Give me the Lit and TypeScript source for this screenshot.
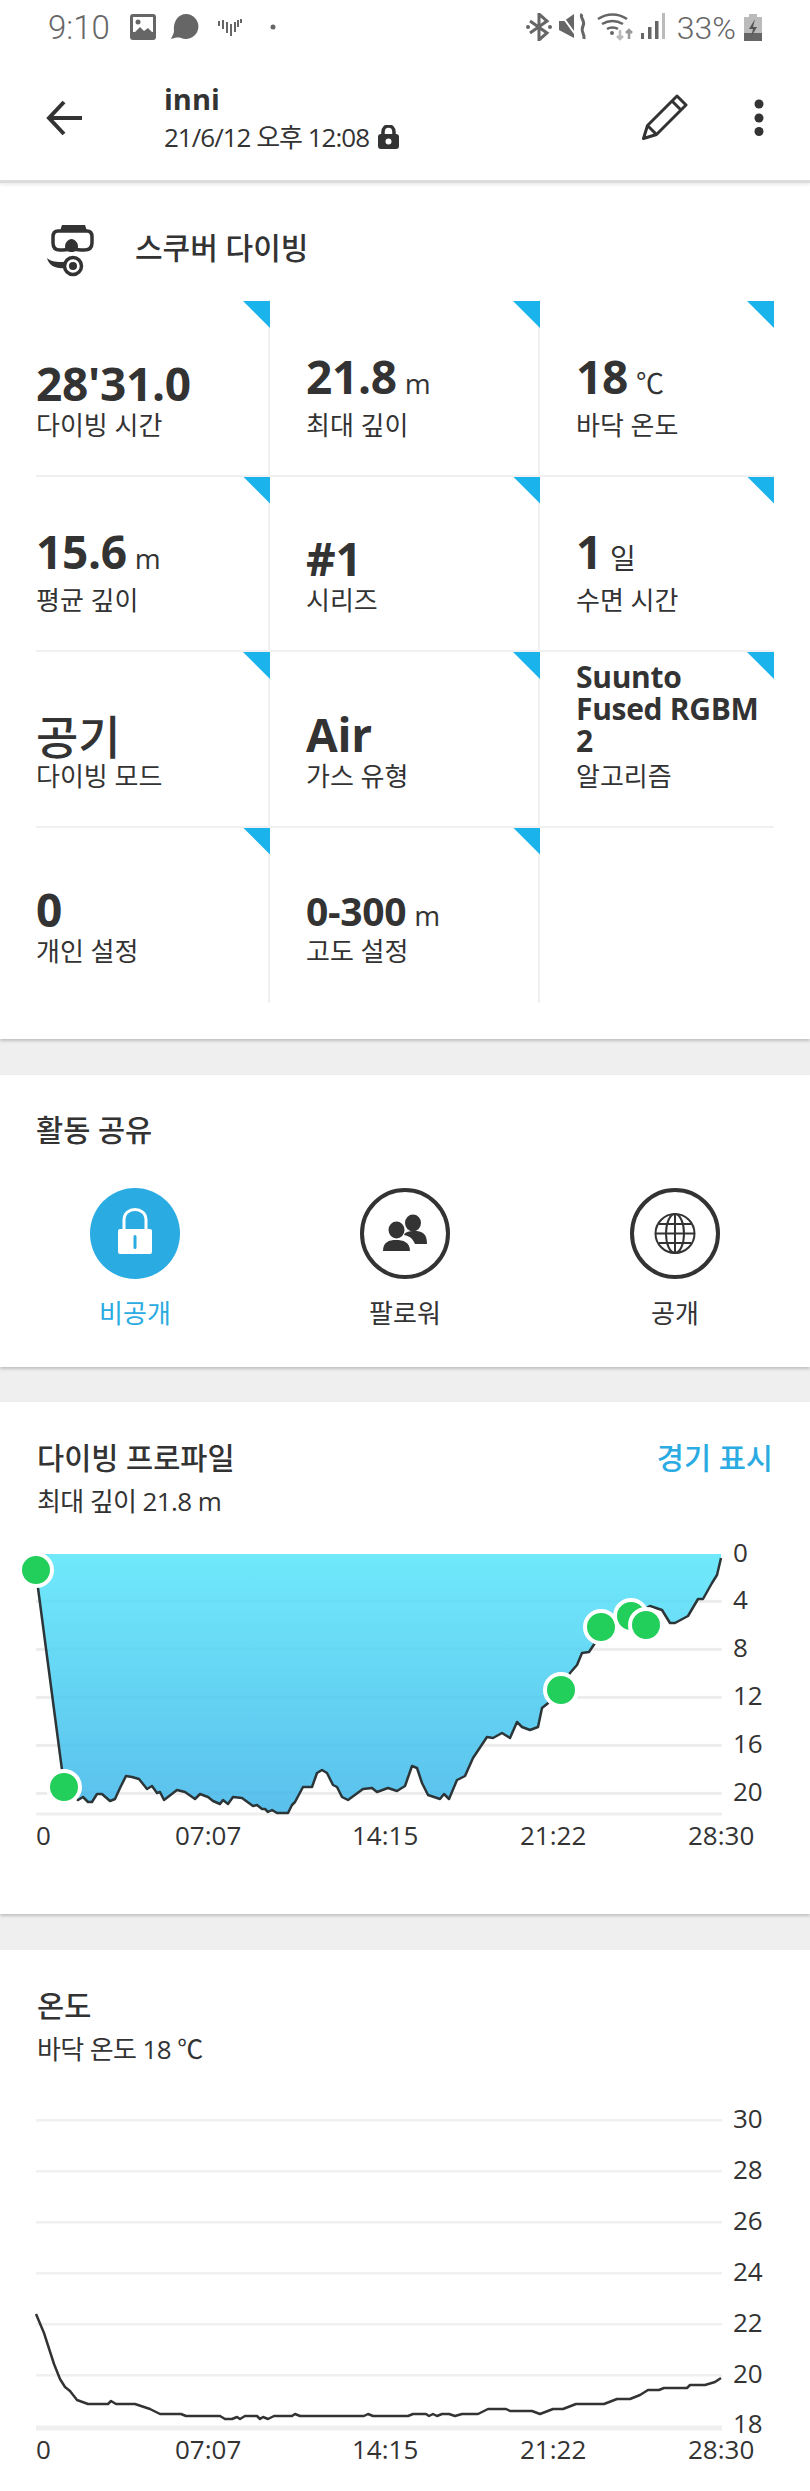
import { LitElement, html, css, svg } from "lit";
import { customElement } from "lit/decorators.js";

type Metric = { value: string; unit?: string; label: string; size?: string; corner?: boolean };

const METRICS: Metric[] = [
  { value: "28'31.0", label: "다이빙 시간" },
  { value: "21.8", unit: "m", label: "최대 깊이" },
  { value: "18", unit: "℃", label: "바닥 온도" },
  { value: "15.6", unit: "m", label: "평균 깊이" },
  { value: "#1", label: "시리즈" },
  { value: "1", unit: "일", label: "수면 시간" },
  { value: "공기", label: "다이빙 모드", size: "ko" },
  { value: "Air", label: "가스 유형" },
  { value: "Suunto\nFused RGBM\n2", label: "알고리즘", size: "long" },
  { value: "0", label: "개인 설정" },
  { value: "0-300", unit: "m", label: "고도 설정", size: "mid" },
  { value: "", label: "", corner: false },
];

const DEPTH = "36,1571 38,1588 62,1770 64,1787 78,1800 83,1797 88,1802 92,1802 97,1794 102,1794 110,1801 115,1799 120,1788 126,1776 132,1777 139,1779 147,1789 152,1786 157,1793 160,1792 164,1800 177,1790 185,1792 195,1799 200,1794 208,1797 213,1801 220,1804 223,1800 228,1804 233,1797 242,1798 253,1806 257,1805 262,1809 265,1809 268,1812 272,1810 277,1813 288,1813 292,1805 295,1802 303,1787 312,1787 317,1773 322,1770 327,1773 333,1785 337,1787 342,1797 348,1800 363,1789 372,1788 377,1792 388,1788 397,1791 405,1786 412,1766 417,1768 422,1783 428,1795 440,1799 444,1794 449,1799 457,1780 465,1776 473,1758 487,1737 493,1738 502,1733 510,1738 517,1722 522,1727 530,1730 538,1727 542,1708 552,1700 561,1690 570,1673 577,1665 582,1653 589,1652 595,1643 601,1627 631,1616 650,1606 662,1610 670,1623 675,1623 688,1616 698,1599 703,1599 712,1583 717,1575 721,1558";

const TEMP = "36,2314 44,2333 54,2364 60,2379 65,2387 70,2391 77,2400 88,2404 108,2404 111,2401 116,2404 135,2404 150,2409 160,2414 181,2414 186,2416 220,2416 225,2419 232,2419 237,2417 240,2419 245,2416 257,2416 260,2419 263,2417 268,2419 274,2416 292,2416 295,2414 300,2416 364,2416 368,2414 373,2416 408,2416 413,2414 426,2414 429,2416 433,2414 437,2416 442,2414 449,2414 455,2416 462,2414 478,2414 488,2409 506,2409 510,2411 532,2411 540,2414 553,2409 563,2409 576,2404 604,2404 617,2399 630,2399 640,2395 648,2390 659,2390 664,2388 687,2388 690,2385 705,2385 715,2382 721,2378";

const DOTS = [
  [36, 1570],
  [64, 1787],
  [561, 1690],
  [601, 1627],
  [631, 1616],
  [646, 1625],
];

const X_LABELS: [string, number][] = [
  ["0", 36],
  ["07:07", 175],
  ["14:15", 352],
  ["21:22", 520],
  ["28:30", 688],
];

@customElement("app-root")
export class AppRoot extends LitElement {
  static styles = css`
    :host {
      display: block;
      width: 810px;
      height: 2491px;
      overflow: hidden;
      background: #efefef;
      color: #333;
      font-family: "Open Sans", "Noto Sans CJK KR", sans-serif;
    }
    .head {
      position: relative;
      z-index: 2;
      height: 180px;
      background: #fff;
      box-shadow: 0 3px 0 #dcdcdc, 0 5px 3px #ececec;
    }
    .status {
      height: 55px;
      display: flex;
      align-items: center;
      color: #666;
      font-family: Roboto, sans-serif;
      font-weight: 300;
      font-size: 33px;
      padding-left: 48px;
      padding-right: 48px;
      box-sizing: border-box;
    }
    .status .time {
      width: 82px;
    }
    .status .spacer {
      flex: 1;
    }
    .status .pct {
      margin: 0 8px 0 12px;
      font-size: 32px;
    }
    .status svg {
      display: block;
      flex: none;
    }
    .bar {
      height: 125px;
      display: flex;
      align-items: center;
      padding: 0 46px;
    }
    .titles {
      margin-left: 82px;
      flex: 1;
    }
    .name {
      font-size: 29px;
      font-weight: 700;
      line-height: 36px;
    }
    .date {
      display: flex;
      align-items: center;
      gap: 9px;
      font-size: 26px;
      line-height: 36px;
      margin-top: 2px;
      letter-spacing: -1px;
    }
    .pencil {
      margin-right: 66px;
      margin-bottom: 2px;
    }
    .card {
      background: #fff;
      box-shadow: 0 2px 3px rgba(0, 0, 0, 0.2);
      position: relative;
    }
    .sport {
      height: 119px;
      display: flex;
      align-items: center;
      padding: 12px 0 0 46px;
      gap: 39px;
      font-size: 30px;
      font-weight: 500;
      box-sizing: border-box;
    }
    .sport svg {
      margin-top: 10px;
    }
    .metrics-wrap {
      padding: 0 36px 36px;
    }
    .metrics {
      display: grid;
      grid-template-columns: 234px 270px 234px;
      grid-template-rows: 175.5px 175.5px 175.5px 177.5px;
    }
    .cell {
      position: relative;
      box-sizing: border-box;
      padding: 0 0 33px 36px;
      border-right: 2px solid #f0f0f0;
      border-top: 2.5px solid #f0f0f0;
      display: flex;
      flex-direction: column;
      justify-content: flex-end;
    }
    .cell:nth-child(-n + 3) {
      border-top-color: transparent;
    }
    .cell:nth-child(n + 10) {
      padding-bottom: 35px;
    }
    .cell:nth-child(3n + 1) {
      padding-left: 0;
    }
    .cell:nth-child(3n) {
      border-right: 0;
    }
    .tri {
      position: absolute;
      right: -2px;
      top: 0;
      width: 27px;
      height: 27px;
      background: #1bb3eb;
      clip-path: polygon(0 0, 100% 0, 100% 100%);
    }
    .cell:nth-child(3n) .tri {
      right: 0;
    }
    .val {
      font-size: 46px;
      font-weight: 700;
      line-height: 50px;
      white-space: nowrap;
      letter-spacing: -0.3px;
    }
    .val.ko {
      font-weight: 500;
      font-family: "Noto Sans CJK KR", sans-serif;
      letter-spacing: 0;
      line-height: 50px;
    }
    .val.mid {
      font-size: 39px;
      line-height: 38px;
    }
    .val.long {
      font-size: 30px;
      line-height: 32px;
      white-space: pre-line;
      letter-spacing: -0.3px;
      margin-bottom: 2px;
    }
    .unit {
      font-size: 28px;
      font-weight: 400;
      margin-left: 8px;
      letter-spacing: 0;
    }
    .label {
      font-size: 26px;
      line-height: 34px;
      white-space: nowrap;
    }
    .section-title {
      font-size: 29.5px;
      font-weight: 500;
      line-height: 40px;
    }
    .gap {
      height: 36px;
    }
    .share {
      height: 292px;
      box-sizing: border-box;
      padding: 35px 36px 0;
    }
    .options {
      display: grid;
      grid-template-columns: repeat(3, 270px);
      margin: 38px 0 0 -36px;
    }
    .opt {
      display: flex;
      flex-direction: column;
      align-items: center;
      gap: 16px;
      font-size: 26px;
      line-height: 36px;
    }
    .opt.on {
      color: #2aabe2;
    }
    .opt svg {
      display: block;
    }
    .chart-sec {
      box-sizing: border-box;
    }
    .chart-sec.p {
      height: 512px;
      margin-top: -1px;
    }
    .chart-sec.t {
      height: 541px;
      box-shadow: none;
    }
    .chart-head {
      padding: 36px 37px 0;
    }
    .row {
      display: flex;
      justify-content: space-between;
    }
    .link {
      color: #2aabe2;
    }
    .sub {
      font-size: 26px;
      line-height: 36px;
      margin-top: 5px;
      letter-spacing: -0.6px;
    }
    .spacer-p {
      height: 21px;
    }
    .spacer-t {
      height: 33px;
    }
    svg.chart {
      display: block;
    }
    svg text {
      font-family: "Open Sans", sans-serif;
      font-size: 26px;
      fill: #333;
    }
  `;

  private statusLeft() {
    return html`
      <span class="time">9:10</span>
      <svg width="26" height="26" viewBox="0 0 26 26" style="margin-top:-2px">
        <rect width="26" height="26" rx="3" fill="#666" />
        <rect x="3" y="3" width="20" height="15" fill="#fff" />
        <circle cx="8" cy="8" r="2.5" fill="#666" />
        <path d="M3 20l7-7 4 4 4-3 5 5v2H3z" fill="#666" />
      </svg>
      <svg width="29" height="26" viewBox="0 0 29 26" style="margin:-2px 0 0 14px">
        <path d="M16 0a12.500 12.500 0 1 1-5 24c-3-1-7 0-10 1 1-3 3-5 3-8C3 8 8 0 16 0z" fill="#666" />
      </svg>
      <svg width="24" height="20" viewBox="0 0 24 20" style="margin:-2px 0 0 19px" stroke="#666" stroke-width="2" fill="none">
        <path d="M1 4v5M5 3v9M9 5v11M13 7v12M17 5v10M20 3v7M23 2v4" />
      </svg>
      <svg width="6" height="6" style="margin:-2px 0 0 28px"><circle cx="3" cy="3" r="2.500" fill="#666" /></svg>
      <span class="spacer"></span>
    `;
  }

  private statusRight() {
    return html`
      <svg width="26" height="28" viewBox="0 0 26 28" fill="none" stroke="#666" stroke-width="3" style="margin-top:-2px">
        <path d="M4 8l17 12-8 7V1l8 7L4 20" />
        <circle cx="2" cy="14" r="2" fill="#666" stroke="none" />
        <circle cx="24" cy="14" r="2" fill="#666" stroke="none" />
      </svg>
      <svg width="29" height="27" viewBox="0 0 29 27" style="margin:-2px 0 0 7px">
        <path d="M0 8h5l10-7v24L0 17z" fill="#666" />
        <path d="M3 3l16 22" stroke="#fff" stroke-width="2" />
        <path d="M23 1c-3 4 4 6 1 12s2 7 1 13" fill="none" stroke="#666" stroke-width="3" />
      </svg>
      <svg width="37" height="28" viewBox="0 0 37 28" fill="none" stroke="#666" stroke-width="2.500" style="margin:-2px 0 0 9px">
        <path d="M1 6c9-6 20-6 29 0M5 11c7-4 14-4 21 0M10 16c3-2 8-2 11 0" />
        <circle cx="15" cy="20" r="2" fill="#666" stroke="none" />
        <path d="M23 17v9M20 23l3 3 3-3" stroke="#bbb" />
        <path d="M32 26v-9M29 20l3-3 3 3" stroke="#999" />
      </svg>
      <svg width="24" height="27" viewBox="0 0 24 27" style="margin:-2px 0 0 7px">
        <rect x="0" y="20" width="3" height="6" fill="#666" />
        <rect x="7" y="14" width="3.500" height="12" fill="#666" />
        <rect x="14" y="8" width="3.500" height="18" fill="#666" />
        <rect x="21" y="0" width="3" height="26" fill="#bbb" />
      </svg>
      <span class="pct">33%</span>
      <svg width="18" height="27" viewBox="0 0 18 27" style="margin-top:-1px">
        <path d="M5 0h8v3h5v24H0V3h5z" fill="#bbb" />
        <rect y="19" width="18" height="8" fill="#666" />
        <path d="M11 5L5 15h4l-2 8 6-10H9z" fill="#555" />
      </svg>
    `;
  }

  private scuba() {
    return html`<svg width="50" height="54" viewBox="0 0 50 54">
      <path d="M16 1h23l2 6H14z" fill="#333" />
      <path d="M12 7h29q5 0 5 6v6q0 7-8 7h-3q-5 0-9-2-4 2-9 2h-3q-7 0-7-7v-6q0-6 5-6z" fill="none" stroke="#333" stroke-width="3.500" />
      <path d="M25.500 15c3.500 0 6.500 4 6.500 7.500S29 28 25.500 28 19 26 19 22.500 22 15 25.500 15z" fill="#333" />
      <circle cx="27" cy="42" r="8.500" fill="none" stroke="#333" stroke-width="3.500" />
      <circle cx="27" cy="42" r="4" fill="#333" />
      <path d="M1 34c4 4 10 4 17 4l1 6C10 45 3 42 1 34z" fill="#333" />
    </svg>`;
  }

  private lockIcon() {
    return html`<svg width="90" height="91" viewBox="0 0 90 91">
      <ellipse cx="45" cy="45.500" rx="45" ry="45.500" fill="#2aabe2" />
      <path d="M34 43V32c0-14 22-14 22 0v11" fill="none" stroke="#fff" stroke-width="3" />
      <rect x="28" y="41" width="34" height="25" rx="2" fill="#fff" />
      <rect x="43.500" y="47" width="3" height="14" rx="1.500" fill="#2aabe2" />
    </svg>`;
  }

  private peopleIcon() {
    return html`<svg width="90" height="91" viewBox="0 0 90 91">
      <ellipse cx="45" cy="45.500" rx="43" ry="43.500" fill="none" stroke="#333" stroke-width="4" />
      <ellipse cx="53" cy="35" rx="8" ry="8.500" fill="#333" />
      <path d="M44 47c1-3 5-4 10-4 8 0 13 2 13 13H55c-2-5-5-8-11-9z" fill="#333" />
      <ellipse cx="36.500" cy="42" rx="8" ry="8.500" fill="#333" />
      <path d="M23 63c0-9 6-11 13-11s14 2 14 11z" fill="#333" />
    </svg>`;
  }

  private globeIcon() {
    return html`<svg width="90" height="91" viewBox="0 0 90 91">
      <g fill="none" stroke="#333">
        <ellipse cx="45" cy="45.500" rx="43" ry="43.500" stroke-width="4" />
        <g stroke-width="2">
          <circle cx="45" cy="45.500" r="19.500" />
          <ellipse cx="45" cy="45.500" rx="9" ry="19.500" />
          <path d="M45 26v39M25.500 45.500h39M29 36h32M29 55h32" />
        </g>
      </g>
    </svg>`;
  }

  private depthChart() {
    const grid = [
      [1601, "4"],
      [1649, "8"],
      [1697, "12"],
      [1745, "16"],
      [1793, "20"],
    ] as [number, string][];
    return html`<svg class="chart" width="810" height="320" viewBox="0 1540 810 320">
      <defs>
        <linearGradient id="depth" x1="0" y1="0" x2="0" y2="1">
          <stop offset="0" stop-color="#70e9fb" />
          <stop offset="1" stop-color="#5ac0ec" />
        </linearGradient>
      </defs>
      ${grid.map(([y]) => svg`<rect x="36" y="${y - 1}" width="686" height="3" fill="#f0f0f0" />`)}
      <rect x="36" y="1812.500" width="686" height="3" fill="#efefef" />
      <polygon points="36,1554 ${DEPTH} 721,1554" fill="url(#depth)" />
      ${grid.map(([y]) => svg`<path d="M36 ${y}H720" stroke="#000" stroke-opacity=".015" stroke-width="3" />`)}
      <polyline points="${DEPTH}" fill="none" stroke="#2c3538" stroke-width="2.500" stroke-linejoin="round" />
      ${DOTS.map(
        ([x, y]) => svg`<circle cx="${x}" cy="${y}" r="16" fill="#22cf5a" stroke="#fff" stroke-width="4" />`
      )}
      <text x="733" y="1562">0</text>
      ${grid.map(([y, t]) => svg`<text x="733" y="${y + 8}">${t}</text>`)}
      ${X_LABELS.map(([t, x]) => svg`<text x="${x}" y="1845">${t}</text>`)}
    </svg>`;
  }

  private tempChart() {
    const grid = [
      [2120, "30"],
      [2171, "28"],
      [2222, "26"],
      [2273, "24"],
      [2324, "22"],
      [2375, "20"],
    ] as [number, string][];
    return html`<svg class="chart" width="810" height="391" viewBox="0 2100 810 391">
      ${grid.map(([y]) => svg`<rect x="36" y="${y - 1}" width="686" height="2.500" fill="#f0f0f0" />`)}
      <rect x="36" y="2425.500" width="686" height="5" fill="#efefef" />
      <polyline points="${TEMP}" fill="none" stroke="#333" stroke-width="2.500" stroke-linejoin="round" />
      ${grid.map(([y, t]) => svg`<text x="733" y="${y + 8}">${t}</text>`)}
      <text x="733" y="2433">18</text>
      ${X_LABELS.map(([t, x]) => svg`<text x="${x}" y="2459">${t}</text>`)}
    </svg>`;
  }

  render() {
    return html`
      <div class="head">
        <div class="status">${this.statusLeft()}${this.statusRight()}</div>
        <div class="bar">
          <svg width="36" height="36" viewBox="0 0 36 36" fill="none" stroke="#333" stroke-width="4">
            <path d="M36 18H3M18 2L3 18l15 16" />
          </svg>
          <div class="titles">
            <div class="name">inni</div>
            <div class="date">
              21/6/12 오후 12:08
              <svg width="21" height="24" viewBox="0 0 21 24">
                <path d="M5 11V7c0-8 11-8 11 0v4" fill="none" stroke="#333" stroke-width="3.500" />
                <rect y="9" width="21" height="15" rx="3" fill="#333" />
                <circle cx="10.500" cy="16.500" r="3" fill="#fff" />
              </svg>
            </div>
          </div>
          <svg class="pencil" width="46" height="46" viewBox="0 0 46 46" fill="none" stroke="#333" stroke-width="3" stroke-linejoin="round">
            <path d="M1.500 44.500l4-13L35 2l9 9-29.500 29.500zM5.500 31.500l9 9M30 7l9 9" />
          </svg>
          <svg width="10" height="38" viewBox="0 0 10 38" fill="#333">
            <circle cx="5" cy="5" r="4.500" /><circle cx="5" cy="19" r="4.500" /><circle cx="5" cy="32.500" r="4.500" />
          </svg>
        </div>
      </div>

      <div class="card">
        <div class="sport">${this.scuba()}<span>스쿠버 다이빙</span></div>
        <div class="metrics-wrap">
          <div class="metrics">
            ${METRICS.map(
              (m) => html`<div class="cell">
                ${m.corner === false ? "" : html`<i class="tri"></i>`}
                ${m.value
                  ? html`<div class="val ${m.size ?? ""}">${m.value}${m.unit ? html`<span class="unit">${m.unit}</span>` : ""}</div>
                      <div class="label">${m.label}</div>`
                  : ""}
              </div>`
            )}
          </div>
        </div>
      </div>
      <div class="gap"></div>

      <div class="card share">
        <div class="section-title">활동 공유</div>
        <div class="options">
          <div class="opt on">${this.lockIcon()}<span>비공개</span></div>
          <div class="opt">${this.peopleIcon()}<span>팔로워</span></div>
          <div class="opt">${this.globeIcon()}<span>공개</span></div>
        </div>
      </div>
      <div class="gap"></div>

      <div class="card chart-sec p">
        <div class="chart-head">
          <div class="row section-title"><span>다이빙 프로파일</span><span class="link">경기 표시</span></div>
          <div class="sub">최대 깊이 21.8 m</div>
        </div>
        <div class="spacer-p"></div>
        ${this.depthChart()}
      </div>
      <div class="gap"></div>

      <div class="card chart-sec t">
        <div class="chart-head">
          <div class="section-title">온도</div>
          <div class="sub">바닥 온도 18 ℃</div>
        </div>
        <div class="spacer-t"></div>
        ${this.tempChart()}
      </div>
    `;
  }
}
